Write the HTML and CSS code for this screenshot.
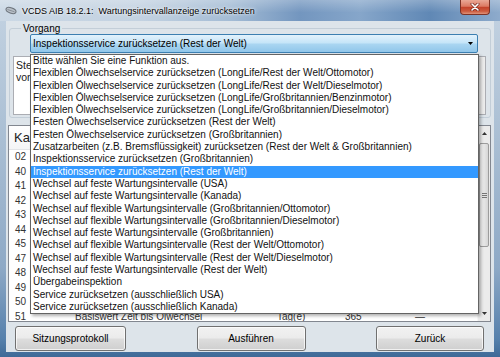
FILE: index.html
```html
<!DOCTYPE html>
<html lang="de">
<head>
<meta charset="utf-8">
<title>VCDS Wartungsintervallanzeige</title>
<link rel="stylesheet" href="styles.css">
</head>
<body>
<div class="window">
  <div class="titlebar">
    <svg class="app-icon" width="12" height="9" viewBox="0 0 12 9">
      <ellipse cx="6" cy="4.5" rx="5.2" ry="2.6" transform="rotate(20 6 4.5)" fill="#b9c0c8" stroke="#6d747c" stroke-width="1"/>
      <path d="M2.5 3.5 L9.5 5.8" stroke="#8a9199" stroke-width="1"/>
    </svg>
    <span class="title">VCDS AIB 18.2.1:  Wartungsintervallanzeige zurücksetzen</span>
    <div class="close">
      <svg width="10" height="8" viewBox="0 0 10 8">
        <path d="M2 1 L8 7 M8 1 L2 7" stroke="#7a2a20" stroke-width="3" stroke-linecap="round"/>
        <path d="M2 1 L8 7 M8 1 L2 7" stroke="#ffffff" stroke-width="1.6" stroke-linecap="round"/>
      </svg>
    </div>
  </div>

  <div class="client">
    <fieldset class="group">
      <legend>Vorgang</legend>
      <div class="combo">
        <span>Inspektionsservice zurücksetzen (Rest der Welt)</span>
        <svg class="combo-arrow" width="5" height="3" viewBox="0 0 5 3"><path d="M0 0 H5 L2.5 3 Z" fill="#000"/></svg>
      </div>
      <div class="textbox">
        <div class="tb-text">
          <div>Steuergerät</div>
          <div>vorhanden</div>
        </div>
        <div class="tb-fill"></div>
        <div class="tb-scroll"></div>
      </div>
    </fieldset>

    <div class="listview">
      <div class="lv-main">
        <div class="lv-header"><span class="c1">Kanal</span></div>
        <div class="lv-row"><span class="c1">02</span></div>
        <div class="lv-row"><span class="c1">40</span></div>
        <div class="lv-row"><span class="c1">41</span></div>
        <div class="lv-row"><span class="c1">42</span></div>
        <div class="lv-row"><span class="c1">43</span></div>
        <div class="lv-row"><span class="c1">44</span></div>
        <div class="lv-row"><span class="c1">45</span></div>
        <div class="lv-row"><span class="c1">47</span></div>
        <div class="lv-row"><span class="c1">48</span></div>
        <div class="lv-row"><span class="c1">49</span></div>
        <div class="lv-row"><span class="c1">50</span></div>
        <div class="lv-row"><span class="c1">51</span><span>Basiswert Zeit bis Ölwechsel</span><span>Tag(e)</span><span>365</span><span>—</span></div>
      </div>
      <div class="lv-scroll">
        <div class="sb-btn"><svg width="5" height="3" viewBox="0 0 5 3"><path d="M0 3 H5 L2.5 0 Z" fill="#333"/></svg></div>
        <div class="sb-thumb"><span class="grip"></span></div>
        <div class="sb-track"></div>
        <div class="sb-btn"><svg width="5" height="3" viewBox="0 0 5 3"><path d="M0 0 H5 L2.5 3 Z" fill="#333"/></svg></div>
      </div>
    </div>

    <div class="actions">
      <button class="btn btn-log">Sitzungsprotokoll</button>
      <button class="btn btn-run">Ausführen</button>
      <button class="btn btn-back">Zurück</button>
    </div>
  </div>

  <div class="dropdown">
    <div class="opt">Bitte wählen Sie eine Funktion aus.</div>
    <div class="opt">Flexiblen Ölwechselservice zurücksetzen (LongLife/Rest der Welt/Ottomotor)</div>
    <div class="opt">Flexiblen Ölwechselservice zurücksetzen (LongLife/Rest der Welt/Dieselmotor)</div>
    <div class="opt">Flexiblen Ölwechselservice zurücksetzen (LongLife/Großbritannien/Benzinmotor)</div>
    <div class="opt">Flexiblen Ölwechselservice zurücksetzen (LongLife/Großbritannien/Dieselmotor)</div>
    <div class="opt">Festen Ölwechselservice zurücksetzen (Rest der Welt)</div>
    <div class="opt">Festen Ölwechselservice zurücksetzen (Großbritannien)</div>
    <div class="opt">Zusatzarbeiten (z.B. Bremsflüssigkeit) zurücksetzen (Rest der Welt &amp; Großbritannien)</div>
    <div class="opt">Inspektionsservice zurücksetzen (Großbritannien)</div>
    <div class="opt sel">Inspektionsservice zurücksetzen (Rest der Welt)</div>
    <div class="opt">Wechsel auf feste Wartungsintervalle (USA)</div>
    <div class="opt">Wechsel auf feste Wartungsintervalle (Kanada)</div>
    <div class="opt">Wechsel auf flexible Wartungsintervalle (Großbritannien/Ottomotor)</div>
    <div class="opt">Wechsel auf flexible Wartungsintervalle (Großbritannien/Dieselmotor)</div>
    <div class="opt">Wechsel auf feste Wartungsintervalle (Großbritannien)</div>
    <div class="opt">Wechsel auf flexible Wartungsintervalle (Rest der Welt/Ottomotor)</div>
    <div class="opt">Wechsel auf flexible Wartungsintervalle (Rest der Welt/Dieselmotor)</div>
    <div class="opt">Wechsel auf feste Wartungsintervalle (Rest der Welt)</div>
    <div class="opt">Übergabeinspektion</div>
    <div class="opt">Service zurücksetzen (ausschließlich USA)</div>
    <div class="opt">Service zurücksetzen (ausschließlich Kanada)</div>
  </div>
</div>
</body>
</html>
```

FILE: styles.css
```css
* { box-sizing: border-box; }

body {
  margin: 0;
  width: 500px;
  height: 357px;
  overflow: hidden;
  font-family: "Liberation Sans", Arial, sans-serif;
  color: #000;
}

.window {
  position: relative;
  width: 500px;
  height: 357px;
  padding: 0 6px 5px 6px;
  display: flex;
  flex-direction: column;
  background: linear-gradient(180deg, #c4d3e2 0%, #a9bed3 40%, #8ea9c6 75%, #5580ac 95%, #3f6a97 100%);
}

/* title bar */
.titlebar {
  height: 21px;
  flex: none;
  margin: 0 -6px;
  padding-left: 5px;
  display: flex;
  align-items: center;
  background:
    linear-gradient(180deg, rgba(255,255,255,0.25) 0%, rgba(255,255,255,0) 60%),
    linear-gradient(90deg, #cbd8e5 0%, #c3d2e1 28%, #a4bcd5 46%, #7396bf 60%, #86a6ca 72%, #6088b5 86%, #8eabcc 100%);
}

.app-icon { flex: none; }

.title {
  margin-left: 5px;
  font-size: 9px;
  white-space: pre;
  color: #000;
  text-shadow: 0 0 4px rgba(255,255,255,0.9), 0 0 2px rgba(255,255,255,0.9);
}

.close {
  margin-left: auto;
  margin-right: 10px;
  align-self: flex-start;
  width: 30px;
  height: 15px;
  border: 1px solid #7d3226;
  border-top: none;
  border-radius: 0 0 4px 4px;
  background: linear-gradient(180deg, #eaa896 0%, #dc7a63 45%, #c4432b 52%, #cc5a3e 80%, #e0937a 100%);
  display: flex;
  align-items: center;
  justify-content: center;
}

/* client area */
.client {
  flex: 1;
  background: #dde4ea;
  display: flex;
  flex-direction: column;
  padding-bottom: 1px;
  min-height: 0;
}

.group {
  margin: 2px 3px 0 3px;
  padding: 0 4px 2px 3px;
  border: 1px solid #c3ced8;
  border-radius: 3px;
  min-width: 0;
}

.group legend {
  margin-left: 8px;
  padding: 0 2px;
  font-size: 10px;
  line-height: 11px;
  height: 11px;
}

.combo {
  margin: 0 8px 0 17px;
  height: 19px;
  border: 1px solid #3c7fb1;
  border-radius: 2px;
  background: linear-gradient(180deg, #e3f2fc 0%, #c6e5f8 45%, #a9d5f1 55%, #90c6ea 100%);
  display: flex;
  align-items: center;
  padding-left: 2px;
  font-size: 10px;
  white-space: nowrap;
}

.combo-arrow {
  margin-left: auto;
  margin-right: 4px;
  flex: none;
}

.textbox {
  margin-top: 3px;
  height: 59px;
  border: 1px solid #abadb3;
  background: #fff;
  display: flex;
}

.tb-text {
  flex: none;
  width: 17px;
  padding: 2px 0 0 2px;
  font-size: 10.5px;
  line-height: 12px;
  white-space: nowrap;
  overflow: hidden;
  color: #222;
}

.tb-fill { flex: 1; }

.tb-scroll {
  width: 17px;
  flex: none;
  background: #ececec;
  border-left: 1px solid #fafafa;
}

/* list view */
.listview {
  margin: 7px 3px 0 2px;
  height: 197px;
  flex: none;
  border: 1px solid #828790;
  background: #fff;
  display: flex;
  overflow: hidden;
}

.lv-main {
  flex: 1;
  min-width: 0;
  overflow: hidden;
}

.lv-header,
.lv-row {
  display: grid;
  grid-template-columns: 66px 202px 68px 70px 1fr;
  align-items: center;
  white-space: nowrap;
}

.lv-header {
  height: 24px;
  font-size: 13px;
  color: #222;
  background: linear-gradient(180deg, #ffffff 0%, #f4f5f7 100%);
  border-bottom: 1px solid #e3e5e8;
}

.lv-header .c1 {
  padding-left: 5px;
  width: 21px;
  overflow: hidden;
}

.lv-row {
  height: 14.5px;
  line-height: 14.5px;
  font-size: 10px;
  color: #333;
}

.lv-row .c1 { padding-left: 6px; }

.lv-scroll {
  width: 13px;
  flex: none;
  background: #ebebeb;
  border-left: 1px solid #f7f7f7;
  display: flex;
  flex-direction: column;
}

.sb-btn {
  height: 15px;
  flex: none;
  display: flex;
  align-items: center;
  justify-content: center;
}

.sb-thumb {
  margin: 2px 1px 0 1px;
  height: 104px;
  flex: none;
  border: 1px solid #9c9c9c;
  border-radius: 2px;
  background: linear-gradient(90deg, #f3f3f3 0%, #e6e6e6 50%, #d6d6d6 100%);
  display: flex;
  align-items: center;
  justify-content: center;
}

.grip {
  width: 5px;
  height: 5px;
  border-top: 1px solid #777;
  border-bottom: 1px solid #777;
  background: linear-gradient(180deg, transparent 1px, #777 1px, #777 2px, transparent 2px);
}

.sb-track { flex: 1; }

/* buttons */
.actions {
  margin-top: 4px;
  display: flex;
  justify-content: space-between;
  padding: 0 10px 0 9px;
}

.btn {
  height: 25px;
  border: 1px solid #707070;
  border-radius: 3px;
  background: linear-gradient(180deg, #f2f2f2 0%, #ebebeb 48%, #dddddd 52%, #cfcfcf 100%);
  box-shadow: inset 0 0 0 1px rgba(255,255,255,0.7);
  font-family: "Liberation Sans", Arial, sans-serif;
  font-size: 10px;
  color: #000;
  padding: 0;
  display: flex;
  align-items: center;
  justify-content: center;
}

.btn-log { width: 111px; }
.btn-run { width: 109px; }
.btn-back { width: 108px; }

/* open dropdown list (popup over the dialog) */
.dropdown {
  position: absolute;
  left: 30px;
  top: 54px;
  width: 449px;
  border: 1px solid #646464;
  background: #fff;
  box-shadow: 2px 2px 3px rgba(0,0,0,0.3);
  font-size: 10px;
}

.opt {
  height: 12.3px;
  line-height: 12.3px;
  padding-left: 2px;
  white-space: nowrap;
  color: #111;
}

.opt.sel {
  background: #3399ff;
  color: #fff;
}
```
